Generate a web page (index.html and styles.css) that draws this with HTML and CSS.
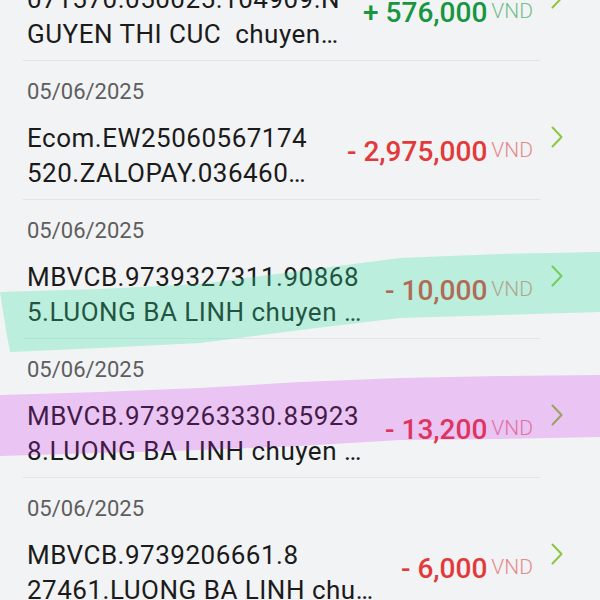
FILE: index.html
```html
<!DOCTYPE html>
<html lang="vi">
<head>
  <meta charset="UTF-8">
  <meta name="viewport" content="width=device-width, initial-scale=1.0">
  <title>Lịch sử giao dịch</title>
  <link rel="stylesheet" href="styles.css">
</head>
<body>
  <div class="list">
    <div class="item">
      <div class="date">05/06/2025</div>
      <div class="body">
        <div class="desc">071570.050025.104909.N<br>GUYEN THI CUC&nbsp; chuyen…</div>
        <div class="amount in"><span class="num">+ 576,000</span><span class="cur">VND</span></div>
        <svg class="chev" width="12" height="22" viewBox="0 0 12 22"><polyline points="1.5,1.5 10.5,11 1.5,20.5"/></svg>
      </div>
    </div>
    <div class="item">
      <div class="date">05/06/2025</div>
      <div class="body">
        <div class="desc">Ecom.EW25060567174<br>520.ZALOPAY.036460…</div>
        <div class="amount out"><span class="num">- 2,975,000</span><span class="cur">VND</span></div>
        <svg class="chev" width="12" height="22" viewBox="0 0 12 22"><polyline points="1.5,1.5 10.5,11 1.5,20.5"/></svg>
      </div>
    </div>
    <div class="item">
      <div class="date">05/06/2025</div>
      <div class="body">
        <div class="desc">MBVCB.9739327311.90868<br>5.LUONG BA LINH chuyen …</div>
        <div class="amount out"><span class="num">- 10,000</span><span class="cur">VND</span></div>
        <svg class="chev" width="12" height="22" viewBox="0 0 12 22"><polyline points="1.5,1.5 10.5,11 1.5,20.5"/></svg>
      </div>
    </div>
    <div class="item">
      <div class="date">05/06/2025</div>
      <div class="body">
        <div class="desc">MBVCB.9739263330.85923<br>8.LUONG BA LINH chuyen …</div>
        <div class="amount out"><span class="num">- 13,200</span><span class="cur">VND</span></div>
        <svg class="chev" width="12" height="22" viewBox="0 0 12 22"><polyline points="1.5,1.5 10.5,11 1.5,20.5"/></svg>
      </div>
    </div>
    <div class="item">
      <div class="date">05/06/2025</div>
      <div class="body">
        <div class="desc">MBVCB.9739206661.8<br>27461.LUONG BA LINH chu…</div>
        <div class="amount out"><span class="num">- 6,000</span><span class="cur">VND</span></div>
        <svg class="chev" width="12" height="22" viewBox="0 0 12 22"><polyline points="1.5,1.5 10.5,11 1.5,20.5"/></svg>
      </div>
    </div>
  </div>

  <!-- vệt bút dạ quang vẽ đè lên ảnh chụp -->
  <svg class="marks" width="600" height="600" viewBox="0 0 600 600">
    <polygon class="mark-green" points="0,292 100,289 200,284 300,271 400,258 500,254 600,252 600,312 500,315 400,318 300,330 200,343 100,348 10,352 6,330"/>
    <polygon class="mark-purple" points="0,395 100,392 200,388 300,382 400,378 500,376 600,375 600,437 500,439 400,440 300,446 200,450 100,453 0,456"/>
  </svg>
</body>
</html>
```

FILE: styles.css
```css
* {
  box-sizing: border-box;
}

body {
  margin: 0;
  height: 600px;
  overflow: hidden;
  position: relative;
  background-color: #f2f3f5;
  font-family: Roboto, "Noto Sans", sans-serif;
  color: #1b1b1b;
}

.list {
  /* dòng đầu tiên bị cắt ở mép trên */
  margin-top: -78px;
}

.item {
  padding: 18px 0 9px 27px;
  /* đường kẻ phân cách không chạy hết chiều ngang */
  background: linear-gradient(#e3e4e7, #e3e4e7) no-repeat 23px 100% / 517px 1px;
}

.date {
  font-size: 22px;
  line-height: 26px;
  color: #5e5e5e;
}

.body {
  display: flex;
  align-items: flex-start;
  margin-top: 16px;
  padding-right: 37px;
}

.desc {
  flex: 1;
  font-size: 26px;
  line-height: 35px;
  letter-spacing: 0.5px;
  white-space: nowrap;
}

.amount {
  display: flex;
  align-items: flex-start;
  margin-top: 14px;
  margin-right: 18px;
}

.num {
  font-size: 28px;
  line-height: 34px;
  font-weight: 500;
}

.cur {
  margin-left: 4px;
  font-size: 21px;
  line-height: 31px;
  font-weight: 300;
}

.in .num {
  color: #17963f;
}

.in .cur {
  color: #74c08c;
}

.out .num {
  color: #e23a3a;
}

.out .cur {
  color: #e58a8c;
}

.chev {
  margin-top: 5px;
  fill: none;
  stroke: #8cc63f;
  stroke-width: 2;
  stroke-linecap: round;
  stroke-linejoin: round;
}

.marks {
  position: absolute;
  top: 0;
  left: 0;
  pointer-events: none;
}

.mark-green {
  fill: rgba(52, 226, 159, 0.29);
}

.mark-purple {
  fill: rgba(205, 30, 232, 0.22);
}
```
